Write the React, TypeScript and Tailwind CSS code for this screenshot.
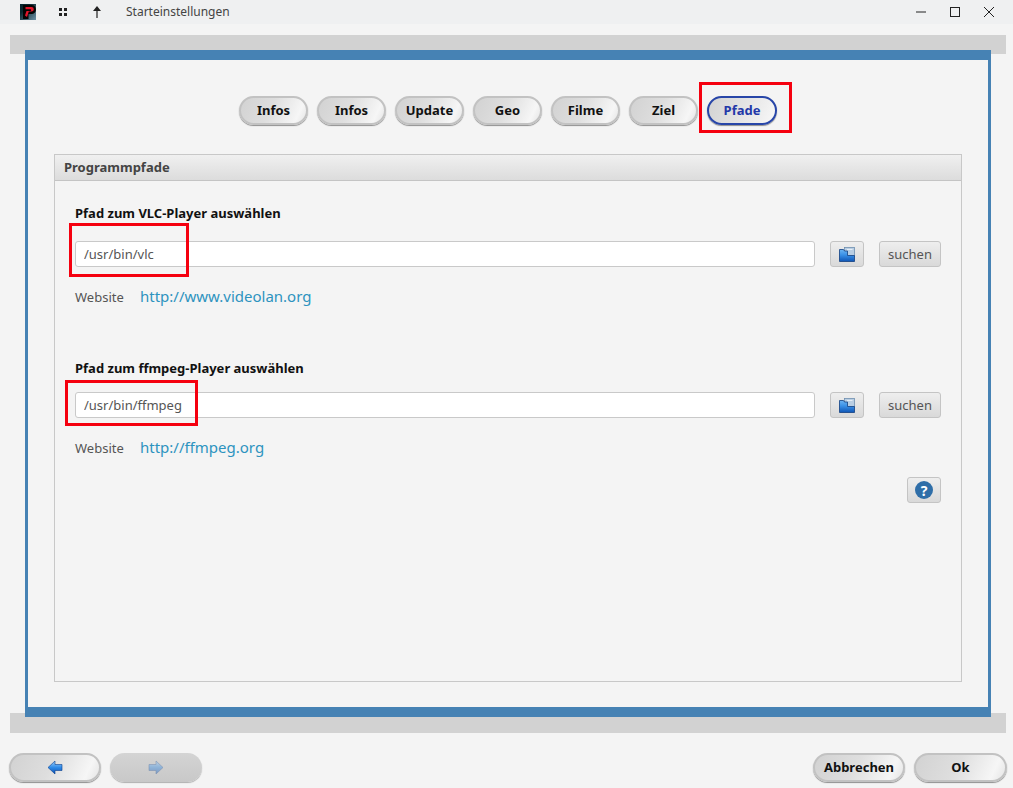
const pill =
  "h-[29px] rounded-full border-2 border-[#c2c2c2] bg-[linear-gradient(115deg,#d2d2d2_0%,#dedede_45%,#f6f6f6_85%,#e4e4e4_100%)] shadow-[0_1px_1px_#8f8f8f] text-[13px] font-bold text-[#111] flex items-center justify-center";
const redBox = "absolute border-[3px] border-[#f5000f] pointer-events-none";
const smallBtn =
  "h-[26px] rounded-[3px] border border-[#c4c4c4] bg-[linear-gradient(180deg,#eeeeee,#d9d9d9)] flex items-center justify-center";

function AppLogo() {
  return (
    <svg width="16" height="16" viewBox="0 0 16 16">
      <defs>
        <linearGradient id="logoBg" x1="0" y1="0" x2="1" y2="1">
          <stop offset="0.3" stopColor="#08262e" />
          <stop offset="1" stopColor="#6f93a8" />
        </linearGradient>
      </defs>
      <rect width="16" height="16" fill="url(#logoBg)" />
      <path d="M3 1h8.5a4 4 0 0 1 0 9H8.5V15H3z" fill="#050505" />
      <path d="M5.5 3h6a2.2 2.2 0 0 1 0 4.6H8.8L7 13 5 11.5 6.5 7h3.8a.9.9 0 0 0 0-1.8H5.5z" fill="#e3152b" />
    </svg>
  );
}

function FolderIcon() {
  return (
    <svg width="16" height="15" viewBox="0 0 16 15">
      <defs>
        <linearGradient id="folderFill" x1="0" y1="0" x2="0" y2="1">
          <stop offset="0" stopColor="#6db4f2" />
          <stop offset="0.45" stopColor="#3a90e6" />
          <stop offset="1" stopColor="#0f55b5" />
        </linearGradient>
      </defs>
      <rect x="5.5" y="0.5" width="10" height="9" fill="#b9cee3" stroke="#6f8fb0" strokeWidth="0.8" />
      <path d="M8 2.5h5.5" stroke="#e6eef6" strokeWidth="1" />
      <path d="M0.5 2.5h4l1 1.5h3v4.5h7v6H0.5z" fill="url(#folderFill)" stroke="#123f80" strokeWidth="0.8" />
    </svg>
  );
}

function ArrowIcon({ dir, faded }: { dir: "left" | "right"; faded?: boolean }) {
  const id = dir === "left" ? "arrowL" : "arrowR";
  return (
    <svg width="16" height="15" viewBox="0 0 16 15" className={faded ? "opacity-40" : ""}>
      <defs>
        <linearGradient id={id} x1="0" y1="0" x2="0" y2="1">
          <stop offset="0" stopColor="#9fd0fa" />
          <stop offset="0.5" stopColor="#2f8be8" />
          <stop offset="1" stopColor="#0d4fb0" />
        </linearGradient>
      </defs>
      <path
        d={dir === "left" ? "M1 7.5 8 1v3.5h7v6H8V14z" : "M15 7.5 8 1v3.5H1v6h7V14z"}
        fill={`url(#${id})`}
        stroke="#0b3f8e"
        strokeWidth="0.6"
      />
    </svg>
  );
}

function PathRow({
  label,
  value,
  url,
  className,
  inputGap,
}: {
  label: string;
  value: string;
  url: string;
  className: string;
  inputGap: string;
}) {
  return (
    <div className={className}>
      <div className="text-[13px] leading-[18px] font-bold text-[#111]">{label}</div>
      <div className={`${inputGap} flex items-center`}>
        <input
          readOnly
          value={value}
          className="h-[26px] w-[740px] rounded-[3px] border border-[#c9c9c9] bg-white pl-2 text-[13px] text-[#555] outline-none"
        />
        <button className={`${smallBtn} ml-[15px] w-[34px]`}>
          <FolderIcon />
        </button>
        <button className={`${smallBtn} ml-[15px] w-[62px] pt-[2px] text-[13px] text-[#555]`}>suchen</button>
      </div>
      <div className="mt-[19px] flex h-[22px] items-center">
        <span className="w-[65px] pt-[2px] text-[13px] text-[#555]">Website</span>
        <a className="pb-[2px] text-[15px] text-[#2d93bf]">{url}</a>
      </div>
    </div>
  );
}

export default function App() {
  const tabs = ["Infos", "Infos", "Update", "Geo", "Filme", "Ziel"];
  return (
    <div className="relative h-[788px] w-[1013px] overflow-hidden bg-[#f4f4f4] font-['Noto_Sans',sans-serif]">
      {/* Titelleiste */}
      <div className="flex h-[24px] items-center bg-[#eff0f1] text-[#333]">
        <div className="ml-[20px]">
          <AppLogo />
        </div>
        <svg className="ml-[22px]" width="10" height="10" viewBox="0 0 10 10">
          <path d="M1 1h3v3H1zM6 1h3v3H6zM1 6h3v3H1zM6 6h3v3H6z" fill="#222" />
        </svg>
        <svg className="ml-[23px]" width="12" height="14" viewBox="0 0 12 14">
          <path d="M6 1 2 6h3.4v7h1.2V6H10z" fill="#222" />
        </svg>
        <span className="ml-[23px] text-[12px] text-[#444]">Starteinstellungen</span>
        <div className="ml-auto flex items-center">
          <svg width="12" height="12" viewBox="0 0 12 12">
            <path d="M1 6h10" stroke="#222" strokeWidth="1" />
          </svg>
          <svg className="ml-[22px]" width="12" height="12" viewBox="0 0 12 12">
            <rect x="1.5" y="1.5" width="9" height="9" fill="none" stroke="#222" />
          </svg>
          <svg className="ml-[22px] mr-[18px]" width="12" height="12" viewBox="0 0 12 12">
            <path d="M1 1l10 10M11 1 1 11" stroke="#222" strokeWidth="1" />
          </svg>
        </div>
      </div>

      {/* Mittelteil */}
      <div className="mx-[10px] mt-[11px] h-[19px] w-[996px] bg-[#d2d2d2]" />
      <div className="relative z-10 ml-[25px] -mt-[4px] flex h-[667px] w-[966px] flex-col border-x-[3px] border-y-[10px] border-[#4682b4] bg-[#f4f4f4]">
        <div className="mt-[36px] flex justify-center gap-[9px]">
          {tabs.map((t, i) => (
            <div key={i} className={`${pill} w-[69px]`}>
              {t}
            </div>
          ))}
          <div className="flex h-[29px] w-[70px] items-center justify-center rounded-full border-2 border-[#2846a8] bg-[linear-gradient(115deg,#d2d2d2_0%,#e4e4e4_50%,#f8f8f8_100%)] text-[13px] font-bold text-[#2338a8] shadow-[0_1px_1px_#8f8f8f]">
            Pfade
          </div>
        </div>

        <div className="ml-[26px] mt-[29px] flex h-[528px] w-[908px] flex-col border border-[#c8c8c8]">
          <div className="flex h-[26px] items-center border-b border-[#c4c4c4] bg-[linear-gradient(180deg,#f0f0f0,#dcdcdc)] pl-[9px] text-[13px] font-bold text-[#444]">
            Programmpfade
          </div>
          <PathRow
            className="ml-[20px] mt-[23px]"
            inputGap="mt-[19px]"
            label="Pfad zum VLC-Player auswählen"
            value="/usr/bin/vlc"
            url="http://www.videolan.org"
          />
          <PathRow
            className="ml-[20px] mt-[51px]"
            inputGap="mt-[15px]"
            label="Pfad zum ffmpeg-Player auswählen"
            value="/usr/bin/ffmpeg"
            url="http://ffmpeg.org"
          />
          <div className="mt-[18px] flex justify-end pr-[20px]">
            <button className={`${smallBtn} w-[34px]`}>
              <span className="flex h-[18px] w-[18px] items-center justify-center rounded-full bg-[#2f6ea8] text-[14px] font-bold text-white">?</span>
            </button>
          </div>
        </div>
      </div>
      <div className="mx-[10px] -mt-[4px] h-[20px] w-[996px] bg-[#d2d2d2]" />

      {/* Fußleiste */}
      <div className="mt-[20px] flex pl-[9px]">
        <div className={`${pill} w-[92px]`}>
          <ArrowIcon dir="left" />
        </div>
        <div className="ml-[9px] flex h-[29px] w-[92px] items-center justify-center rounded-full bg-[linear-gradient(180deg,#d4d4d4,#c8c8c8)] shadow-[0_1px_1px_#b0b0b0]">
          <ArrowIcon dir="right" faded />
        </div>
        <div className={`${pill} ml-auto w-[92px]`}>Abbrechen</div>
        <div className={`${pill} ml-[9px] mr-[6px] w-[93px]`}>Ok</div>
      </div>

      {/* rote Markierungen */}
      <div className={`${redBox} left-[699px] top-[82px] z-20 h-[51px] w-[93px]`} />
      <div className={`${redBox} left-[69px] top-[223px] z-20 h-[54px] w-[120px]`} />
      <div className={`${redBox} left-[65px] top-[380px] z-20 h-[46px] w-[133px]`} />
    </div>
  );
}
